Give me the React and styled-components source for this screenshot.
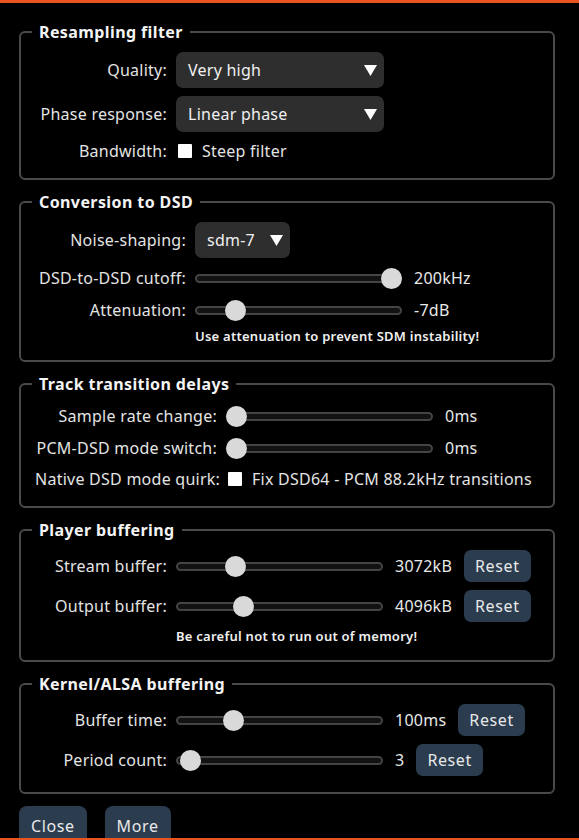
import React from "react";
import styled, { createGlobalStyle } from "styled-components";

const Global = createGlobalStyle`
  html, body { margin: 0; padding: 0; background: #000; }
  body { font-family: "Noto Sans", "DejaVu Sans", sans-serif; }
`;

const Frame = styled.div`
  box-sizing: border-box;
  height: 840px;
  overflow: hidden;
  background: #000;
  border-top: 3px solid #e95420;
  border-bottom: 2px solid #e95420;
  padding: 19px 24px 0 19px;
  color: #e4e4e4;
  font-size: 16px;
  letter-spacing: 0.25px;
`;

const Group = styled.fieldset`
  box-sizing: border-box;
  width: 536px;
  min-width: 0;
  margin: 0 0 12px;
  padding: 10px 14px 16px;
  border: 2px solid #4a4a4a;
  border-radius: 6px;
`;

const Legend = styled.legend`
  margin-left: -3px;
  padding: 0 7px;
  font-size: 16px;
  font-weight: 700;
  line-height: 20px;
  letter-spacing: 0.4px;
  color: #f4f4f4;
`;

const Grid = styled.div`
  display: grid;
  grid-template-columns: ${(p) => p.$label}px auto;
  column-gap: 9px;
  row-gap: 8px;
  align-items: center;
`;

const Label = styled.div`
  text-align: right;
  white-space: nowrap;
  line-height: 20px;
  direction: rtl;
  unicode-bidi: plaintext;
`;

const Controls = styled.div`
  display: flex;
  align-items: center;
  gap: 12px;
  min-height: ${(p) => p.$h || 24}px;
  white-space: nowrap;
`;

const SelectBox = styled.div`
  box-sizing: border-box;
  display: flex;
  align-items: center;
  justify-content: space-between;
  gap: 15px;
  width: ${(p) => (p.$width ? `${p.$width}px` : "auto")};
  height: 36px;
  padding: 0 7px 0 12px;
  background: #2e2e2e;
  border-radius: 7px;
  color: #f0f0f0;
`;

const SliderBox = styled.div`
  position: relative;
  flex: none;
  display: flex;
  align-items: center;
  width: 207px;
  height: 24px;
`;

const Rail = styled.div`
  box-sizing: border-box;
  width: 100%;
  height: 9px;
  border: 2px solid #444;
  background: #121212;
  border-radius: 5px;
`;

const Knob = styled.div`
  position: absolute;
  top: 1.5px;
  width: 21px;
  height: 21px;
  border-radius: 50%;
  background: #d9d9d9;
`;

const Value = styled.span`
  flex: none;
  color: #e8e8e8;
`;

const ResetButton = styled.button`
  box-sizing: border-box;
  height: 32px;
  padding: 0 11px;
  border: none;
  border-radius: 7px;
  background: #2b3c4f;
  color: #e8e8e8;
  font: inherit;
  letter-spacing: 0.6px;
`;

const CheckLine = styled.div`
  display: flex;
  align-items: center;
  gap: 10px;
  height: 22px;
  white-space: nowrap;
`;

const Box = styled.span`
  display: block;
  width: 14px;
  height: 14px;
  margin-left: 2px;
  background: #fff;
  border-radius: 1px;
`;

const Note = styled.div`
  grid-column: 2;
  margin-top: -2px;
  font-size: 13px;
  font-weight: 600;
  line-height: 16px;
  letter-spacing: 0.25px;
  color: #f0f0f0;
  white-space: nowrap;
`;

const ButtonRow = styled.div`
  display: flex;
  gap: 18px;
  margin-top: 2px;
`;

const ActionButton = styled.button`
  box-sizing: border-box;
  height: 40px;
  padding: 0 12px;
  border: none;
  border-radius: 8px;
  background: #2b3c4f;
  color: #e8e8e8;
  font: inherit;
  letter-spacing: 0.6px;
`;

const Arrow = () => (
  <svg width="13" height="11" viewBox="0 0 13 11">
    <polygon points="0,0 13,0 6.5,11" fill="#fff" />
  </svg>
);

const Select = ({ value, width }) => (
  <SelectBox $width={width}>
    <span>{value}</span>
    <Arrow />
  </SelectBox>
);

const Slider = ({ pos }) => (
  <SliderBox>
    <Rail />
    <Knob style={{ left: `${pos * (207 - 21)}px` }} />
  </SliderBox>
);

const Check = ({ text }) => (
  <CheckLine>
    <Box />
    <span>{text}</span>
  </CheckLine>
);

export default function App() {
  return (
    <>
      <Global />
      <Frame>
        <Group>
          <Legend>Resampling filter</Legend>
          <Grid $label={132}>
            <Label>Quality:</Label>
            <Controls $h={36}>
              <Select value="Very high" width={208} />
            </Controls>
            <Label>Phase response:</Label>
            <Controls $h={36}>
              <Select value="Linear phase" width={208} />
            </Controls>
            <Label>Bandwidth:</Label>
            <Check text="Steep filter" />
          </Grid>
        </Group>

        <Group>
          <Legend>Conversion to DSD</Legend>
          <Grid $label={151}>
            <Label>Noise-shaping:</Label>
            <Controls $h={36}>
              <Select value="sdm-7" />
            </Controls>
            <Label>DSD-to-DSD cutoff:</Label>
            <Controls>
              <Slider pos={1} />
              <Value>200kHz</Value>
            </Controls>
            <Label>Attenuation:</Label>
            <Controls>
              <Slider pos={0.16} />
              <Value>-7dB</Value>
            </Controls>
            <Note>Use attenuation to prevent SDM instability!</Note>
          </Grid>
        </Group>

        <Group>
          <Legend>Track transition delays</Legend>
          <Grid $label={182}>
            <Label>Sample rate change:</Label>
            <Controls>
              <Slider pos={0} />
              <Value>0ms</Value>
            </Controls>
            <Label>PCM-DSD mode switch:</Label>
            <Controls>
              <Slider pos={0} />
              <Value>0ms</Value>
            </Controls>
            <Label>Native DSD mode quirk:</Label>
            <Check text="Fix DSD64 - PCM 88.2kHz transitions" />
          </Grid>
        </Group>

        <Group>
          <Legend>Player buffering</Legend>
          <Grid $label={132}>
            <Label>Stream buffer:</Label>
            <Controls $h={32}>
              <Slider pos={0.266} />
              <Value>3072kB</Value>
              <ResetButton>Reset</ResetButton>
            </Controls>
            <Label>Output buffer:</Label>
            <Controls $h={32}>
              <Slider pos={0.304} />
              <Value>4096kB</Value>
              <ResetButton>Reset</ResetButton>
            </Controls>
            <Note>Be careful not to run out of memory!</Note>
          </Grid>
        </Group>

        <Group>
          <Legend>Kernel/ALSA buffering</Legend>
          <Grid $label={132}>
            <Label>Buffer time:</Label>
            <Controls $h={32}>
              <Slider pos={0.25} />
              <Value>100ms</Value>
              <ResetButton>Reset</ResetButton>
            </Controls>
            <Label>Period count:</Label>
            <Controls $h={32}>
              <Slider pos={0.024} />
              <Value>3</Value>
              <ResetButton>Reset</ResetButton>
            </Controls>
          </Grid>
        </Group>

        <ButtonRow>
          <ActionButton>Close</ActionButton>
          <ActionButton>More</ActionButton>
        </ButtonRow>
      </Frame>
    </>
  );
}
